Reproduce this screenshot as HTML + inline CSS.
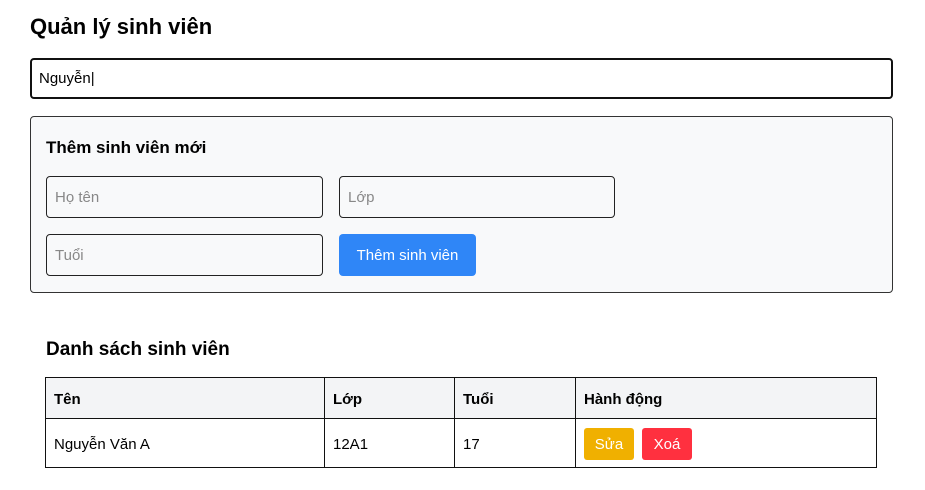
<!DOCTYPE html>
<html><head><meta charset="utf-8"><style>
*{box-sizing:border-box;margin:0;padding:0}
body{width:925px;height:490px;background:#fff;font-family:"Liberation Sans","DejaVu Sans",sans-serif;color:#000;position:relative;overflow:hidden}
.a{position:absolute}
h1{position:absolute;left:30px;top:14px;font-size:22px;font-weight:bold}
.search{left:30px;top:58px;width:863px;height:41px;border:2px solid #111;border-radius:4px;font-size:15px;padding:10px 7px}
.box{left:30px;top:116px;width:863px;height:177px;border:1px solid #333;border-radius:4px;background:#f8f9fa}
.h2{font-size:17px;font-weight:bold}
.inp{border:1px solid #222;border-radius:4px;background:#f8f9fa;height:42px;font-size:15px;color:#888;padding:12px 8px}
.btn{background:#2f86f7;color:#fff;border-radius:4px;font-size:15px;text-align:center;height:42px;line-height:43px}
table{position:absolute;left:45px;top:377px;width:832px;border-collapse:collapse;font-size:15px}
td,th{border:1px solid #111;padding:2px 8px 0;text-align:left}
th{background:#f3f4f6;height:41px;font-weight:bold}
td{height:49px}
.b{display:inline-block;width:50px;height:32px;line-height:34px;text-align:center;color:#fff;border-radius:3px;font-size:15px;margin-right:8px;vertical-align:middle}
</style></head><body>
<h1>Quản lý sinh viên</h1>
<div class="a search">Nguyễn|</div>
<div class="a box"></div>
<div class="a h2" style="left:46px;top:138px">Thêm sinh viên mới</div>
<div class="a inp" style="left:46px;top:176px;width:277px">Họ tên</div>
<div class="a inp" style="left:339px;top:176px;width:276px">Lớp</div>
<div class="a inp" style="left:46px;top:234px;width:277px">Tuổi</div>
<div class="a btn" style="left:339px;top:234px;width:137px">Thêm sinh viên</div>
<div class="a" style="left:46px;top:339px;font-size:19px;font-weight:bold">Danh sách sinh viên</div>
<table>
<tr><th style="width:279px">Tên</th><th style="width:130px">Lớp</th><th style="width:121px">Tuổi</th><th>Hành động</th></tr>
<tr><td>Nguyễn Văn A</td><td>12A1</td><td>17</td><td><span class="b" style="background:#f0b000">Sửa</span><span class="b" style="background:#ff303f">Xoá</span></td></tr>
</table>
</body></html>
